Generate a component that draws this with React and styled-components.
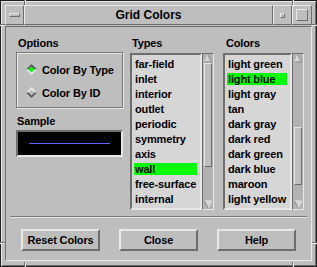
import styled, { createGlobalStyle } from "styled-components";

const GlobalStyle = createGlobalStyle`
  html, body { margin: 0; padding: 0; background: #bebebe; }
  body { font-family: "Liberation Sans", Arial, sans-serif; }
`;

const LIGHT = "#e8e8e8";
const DARK = "#6e6e6e";
const raised = `border-style: solid; border-color: ${LIGHT} ${DARK} ${DARK} ${LIGHT};`;
const sunken = `border-style: solid; border-color: ${DARK} ${LIGHT} ${LIGHT} ${DARK};`;

const types = ["far-field", "inlet", "interior", "outlet", "periodic", "symmetry", "axis", "wall", "free-surface", "internal"];
const colors = ["light green", "light blue", "light gray", "tan", "dark gray", "dark red", "dark green", "dark blue", "maroon", "light yellow"];

const Window = styled.div`
  position: relative;
  width: 317px;
  height: 267px;
  box-sizing: border-box;
  border: 1px solid #1e1e1e;
  padding: 4px 4px 5px;
  background: #bebebe;
  box-shadow: inset 1px 1px 0 ${LIGHT}, inset -1px -1px 0 ${DARK};
  display: flex;
  flex-direction: column;
  font: bold 11px "Liberation Sans", Arial, sans-serif;
  letter-spacing: -0.15px;
  color: #000;
`;

const Notch = styled.div`
  position: absolute;
  ${(p) =>
    p.$vertical
      ? `left: ${p.$at}px; width: 1px; height: 5px; border-right: 1px solid ${LIGHT}; background: ${DARK}; ${p.$end ? "bottom: -1px;" : "top: -1px;"}`
      : `top: ${p.$at}px; height: 1px; width: 5px; border-bottom: 1px solid ${LIGHT}; background: ${DARK}; ${p.$end ? "right: -1px;" : "left: -1px;"}`}
`;

const TitleBar = styled.div`
  display: flex;
  height: 20px;
`;

const TitleButton = styled.div`
  width: ${(p) => p.$w}px;
  box-sizing: border-box;
  border-width: 1px;
  ${raised}
  display: flex;
  align-items: center;
  justify-content: center;
`;

const TitleText = styled.div`
  flex: 1;
  border-width: 1px;
  ${raised}
  display: flex;
  align-items: center;
  justify-content: center;
  font-size: 12px;
  letter-spacing: 0;
`;

const WinIcon = styled.div`
  width: ${(p) => p.$w}px;
  height: ${(p) => p.$h}px;
  box-sizing: border-box;
  border-width: 1px;
  ${raised}
`;

const Content = styled.div`
  flex: 1;
  margin-top: 1px;
  border-width: 1px;
  ${sunken}
  display: flex;
  flex-direction: column;
`;

const Columns = styled.div`
  display: flex;
  padding: 10px 0 0 10px;
`;

const Column = styled.div`
  width: ${(p) => p.$w}px;
  margin-left: ${(p) => p.$gap || 0}px;
  display: flex;
  flex-direction: column;
`;

const Label = styled.div`
  height: 13px;
  line-height: 13px;
  padding-left: ${(p) => p.$indent || 0}px;
  margin-top: ${(p) => p.$top || 0}px;
`;

const OptionsBox = styled.div`
  margin-top: 2px;
  height: 56px;
  box-sizing: border-box;
  border: 1px solid #7a7a7a;
  box-shadow: inset 1px 1px 0 ${LIGHT}, 1px 1px 0 ${LIGHT};
  padding: 8px 0 0 9px;
  display: flex;
  flex-direction: column;
  gap: 6px;
`;

const RadioRow = styled.div`
  height: 17px;
  display: flex;
  align-items: center;
  gap: 5px;
`;

const SampleBox = styled.div`
  margin-top: 2px;
  height: 27px;
  box-sizing: border-box;
  border-width: 2px;
  ${sunken}
  background: #000;
  display: flex;
  align-items: center;
  padding-left: 11px;
`;

const SampleLine = styled.div`
  width: 81px;
  height: 1px;
  background: #6262ff;
`;

const ListFrame = styled.div`
  margin-top: 3px;
  height: 157px;
  display: flex;
`;

const ListPane = styled.div`
  flex: 1;
  box-sizing: border-box;
  border-width: 2px;
  ${sunken}
  background: #d6d6d6;
  padding-left: 2px;
  overflow: hidden;
`;

const Items = styled.div`
  display: inline-flex;
  flex-direction: column;
`;

const Item = styled.div`
  height: 12px;
  line-height: 12px;
  margin-top: 3px;
  padding: 0 1px;
  white-space: nowrap;
  background: ${(p) => (p.$selected ? "#00ff00" : "transparent")};
`;

const ScrollBar = styled.div`
  width: 12px;
  box-sizing: border-box;
  border-width: 1px;
  ${sunken}
  background: #b2b2b2;
  display: flex;
  flex-direction: column;
  align-items: center;
`;

const Thumb = styled.div`
  width: 8px;
  box-sizing: border-box;
  margin-top: ${(p) => p.$offset}px;
  height: ${(p) => p.$size}px;
  border-width: 1px;
  ${raised}
  background: #bebebe;
`;

const Arrow = styled.svg`
  display: block;
  margin-top: ${(p) => (p.$down ? "auto" : "0")};
  flex-shrink: 0;
`;

const Separator = styled.div`
  margin: 6px 4px 0;
  border-top: 1px solid #7a7a7a;
  border-bottom: 1px solid ${LIGHT};
`;

const ButtonRow = styled.div`
  display: flex;
  gap: 19px;
  padding-left: 15px;
  margin-top: 11px;
`;

const Button = styled.div`
  width: 79px;
  height: 22px;
  box-sizing: border-box;
  border-width: 2px;
  ${raised}
  display: flex;
  align-items: center;
  justify-content: center;
`;

const Diamond = ({ on }) => (
  <svg width="11" height="11" viewBox="0 0 11 11">
    <polygon points="0,5.5 5.5,0 11,5.5" fill={on ? "#5a5a5a" : LIGHT} />
    <polygon points="0,5.5 5.5,11 11,5.5" fill={on ? LIGHT : "#5a5a5a"} />
    <polygon points="2.5,5.5 5.5,2.5 8.5,5.5 5.5,8.5" fill={on ? "#00ff00" : "#bebebe"} />
  </svg>
);

const ScrollArrow = ({ down }) => (
  <Arrow $down={down} width="8" height="9" viewBox="0 0 8 9">
    {down ? (
      <>
        <polygon points="0.5,1 7.5,1 4,8" fill="#cfcfcf" />
        <polyline points="0.5,1 7.5,1 4,8" fill="none" stroke={LIGHT} strokeWidth="1" />
        <line x1="0.5" y1="1" x2="4" y2="8" stroke="#8a8a8a" strokeWidth="1" />
      </>
    ) : (
      <>
        <polygon points="4,1 7.5,8 0.5,8" fill="#cfcfcf" />
        <line x1="4" y1="1" x2="0.5" y2="8" stroke={LIGHT} strokeWidth="1" />
        <polyline points="4,1 7.5,8 0.5,8" fill="none" stroke="#8a8a8a" strokeWidth="1" />
      </>
    )}
  </Arrow>
);

const List = ({ items, selected, thumbOffset, thumbSize }) => (
  <ListFrame>
    <ListPane>
      <Items>
        {items.map((it) => (
          <Item key={it} $selected={it === selected}>
            {it}
          </Item>
        ))}
      </Items>
    </ListPane>
    <ScrollBar>
      <ScrollArrow />
      <Thumb $offset={thumbOffset} $size={thumbSize} />
      <ScrollArrow down />
    </ScrollBar>
  </ListFrame>
);

const App = () => {
  return (
    <>
      <GlobalStyle />
      <Window>
        <Notch $vertical $at={23} />
        <Notch $vertical $at={291} />
        <Notch $vertical $end $at={23} />
        <Notch $vertical $end $at={291} />
        <Notch $at={23} />
        <Notch $at={241} />
        <Notch $end $at={23} />
        <Notch $end $at={241} />
        <TitleBar>
          <TitleButton $w={19}>
            <WinIcon $w={11} $h={4} />
          </TitleButton>
          <TitleText>Grid Colors</TitleText>
          <TitleButton $w={19}>
            <WinIcon $w={5} $h={5} />
          </TitleButton>
          <TitleButton $w={20}>
            <WinIcon $w={12} $h={12} />
          </TitleButton>
        </TitleBar>
        <Content>
          <Columns>
            <Column $w={107}>
              <Label $indent={2}>Options</Label>
              <OptionsBox>
                <RadioRow>
                  <Diamond on />
                  Color By Type
                </RadioRow>
                <RadioRow>
                  <Diamond />
                  Color By ID
                </RadioRow>
              </OptionsBox>
              <Label $indent={1} $top={7}>Sample</Label>
              <SampleBox>
                <SampleLine />
              </SampleBox>
            </Column>
            <Column $w={84} $gap={7}>
              <Label $indent={2}>Types</Label>
              <List items={types} selected="wall" thumbOffset={0} thumbSize={104} />
            </Column>
            <Column $w={81} $gap={9}>
              <Label $indent={3}>Colors</Label>
              <List items={colors} selected="light blue" thumbOffset={64} thumbSize={58} />
            </Column>
          </Columns>
          <Separator />
          <ButtonRow>
            <Button>Reset Colors</Button>
            <Button>Close</Button>
            <Button>Help</Button>
          </ButtonRow>
        </Content>
      </Window>
    </>
  );
};

export default App;
